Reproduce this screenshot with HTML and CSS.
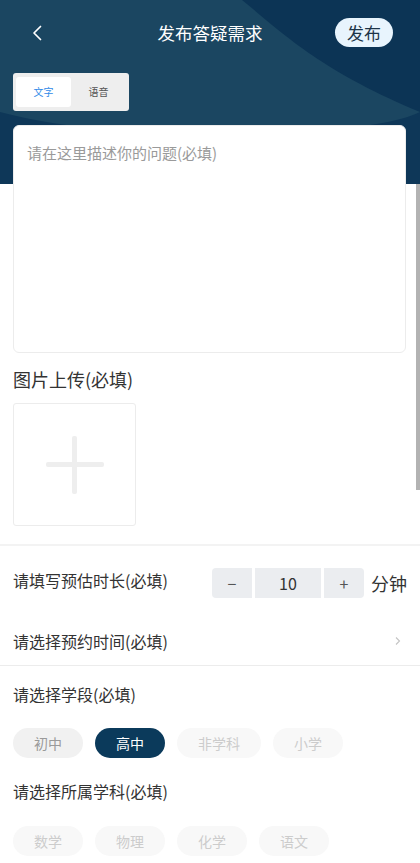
FILE: index.html
```html
<!DOCTYPE html>
<html lang="zh">
<head>
<meta charset="utf-8">
<title>发布答疑需求</title>
<link rel="stylesheet" href="styles.css">
</head>
<body>
<div class="page">
  <svg class="hero-bg" width="420" height="184" viewBox="0 0 420 184" preserveAspectRatio="none">
    <rect x="0" y="0" width="420" height="184" fill="#1b4661"/>
    <path d="M242 0 C 285 35, 320 70, 420 112 L420 0 Z" fill="#0c3455"/>
    <path d="M0 112 C 60 128, 160 140, 300 132 C 360 128, 400 122, 420 112 L420 184 L0 184 Z" fill="#0e3758"/>
  </svg>

  <div class="nav">
    <span class="back">
      <svg width="12" height="16" viewBox="0 0 12 16"><polyline points="9.5,1.5 3,8 9.5,14.5" fill="none" stroke="#ffffff" stroke-width="1.7" stroke-linecap="round" stroke-linejoin="round"/></svg>
    </span>
    <span class="title">发布答疑需求</span>
    <span class="publish">发布</span>
  </div>

  <div class="tabs">
    <span class="tab active">文字</span>
    <span class="tab">语音</span>
  </div>

  <div class="text-card">
    <span class="placeholder">请在这里描述你的问题(必填)</span>
  </div>

  <div class="section-title">图片上传(必填)</div>
  <div class="upload">
    <span class="plus-h"></span>
    <span class="plus-v"></span>
  </div>

  <div class="divider-thick"></div>

  <div class="row duration">
    <span class="label">请填写预估时长(必填)</span>
    <div class="stepper-wrap">
      <div class="stepper">
        <span class="step-btn">−</span>
        <span class="step-val">10</span>
        <span class="step-btn">+</span>
      </div>
      <span class="unit">分钟</span>
    </div>
  </div>

  <div class="row appoint">
    <span class="label">请选择预约时间(必填)</span>
    <svg class="arrow" width="8" height="10" viewBox="0 0 8 10"><polyline points="2,1.5 5.5,5 2,8.5" fill="none" stroke="#c4c4c4" stroke-width="1.1"/></svg>
  </div>
  <div class="divider-thin"></div>

  <div class="label group-label">请选择学段(必填)</div>
  <div class="chips">
    <span class="chip chip-normal">初中</span>
    <span class="chip chip-active">高中</span>
    <span class="chip chip-faint chip-wide">非学科</span>
    <span class="chip chip-faint">小学</span>
  </div>

  <div class="label group-label second">请选择所属学科(必填)</div>
  <div class="chips subjects">
    <span class="chip chip-faint">数学</span>
    <span class="chip chip-faint">物理</span>
    <span class="chip chip-faint">化学</span>
    <span class="chip chip-faint">语文</span>
  </div>

  <div class="scrollbar"></div>
</div>
</body>
</html>
```

FILE: styles.css
```css
* { box-sizing: border-box; }
html, body {
  margin: 0;
  padding: 0;
  background: #ffffff;
}
body {
  font-family: "Noto Sans CJK SC", "Noto Sans", sans-serif;
  color: #333333;
}
.page {
  position: relative;
  width: 420px;
  height: 863px;
  overflow: hidden;
  background: #ffffff;
}
.hero-bg {
  position: absolute;
  left: 0;
  top: 0;
  z-index: 0;
}
.nav, .tabs, .text-card, .section-title, .upload, .row, .chips, .group-label, .divider-thick, .divider-thin {
  position: relative;
  z-index: 1;
}
.nav {
  height: 66px;
  display: grid;
  grid-template-columns: 1fr auto 1fr;
  align-items: center;
  padding: 0 27px;
}
.back {
  width: 12px;
  height: 16px;
  display: flex;
  justify-self: start;
  margin-left: 4px;
}
.title {
  color: #ffffff;
  font-size: 17.5px;
  line-height: 24px;
}
.publish {
  justify-self: end;
  width: 58px;
  height: 29px;
  border-radius: 15px;
  background: #e8f4fd;
  color: #1c3448;
  font-size: 17px;
  line-height: 29px;
  text-align: center;
  margin-top: -2px;
}
.tabs {
  margin: 7px 0 0 13px;
  width: 116px;
  height: 38px;
  background: #eeeeee;
  border-radius: 3px;
  padding: 4px 3px;
  display: flex;
}
.tab {
  width: 55px;
  height: 30px;
  font-size: 10px;
  line-height: 30px;
  text-align: center;
  color: #555555;
}
.tab.active {
  background: #ffffff;
  color: #2f8ae8;
  border-radius: 3px;
}
.text-card {
  margin: 14px 14px 0 13px;
  height: 228px;
  background: #ffffff;
  border: 1px solid #ececec;
  border-radius: 6px;
  padding: 14px 13px;
}
.placeholder {
  font-size: 15px;
  line-height: 21px;
  color: #9a9a9a;
}
.section-title {
  margin: 14px 0 0 13px;
  font-size: 18px;
  line-height: 25px;
  color: #333333;
}
.upload {
  margin: 11px 0 0 13px;
  width: 123px;
  height: 123px;
  border: 1px solid #ececec;
  border-radius: 3px;
  display: grid;
  place-items: center;
}
.plus-h, .plus-v {
  grid-area: 1 / 1;
  background: #eeeeee;
  border-radius: 2px;
}
.plus-h { width: 58px; height: 5px; }
.plus-v { width: 5px; height: 58px; }
.divider-thick {
  margin-top: 18px;
  height: 2px;
  background: #f3f3f3;
}
.row {
  display: flex;
  align-items: center;
  justify-content: space-between;
  padding: 0 13px;
}
.label {
  font-size: 16px;
  line-height: 22px;
  color: #333333;
}
.duration {
  margin-top: 22px;
  height: 30px;
}
.duration .label {
  margin-top: -6px;
}
.stepper-wrap {
  display: flex;
  align-items: center;
  gap: 7px;
}
.stepper {
  display: flex;
  gap: 3px;
}
.step-btn {
  width: 40px;
  height: 30px;
  background: #ebedf0;
  text-align: center;
  line-height: 30px;
  font-size: 16px;
  color: #555555;
}
.step-btn:first-child { border-radius: 4px 0 0 4px; }
.step-btn:last-child { border-radius: 0 4px 4px 0; }
.step-val {
  width: 66px;
  height: 30px;
  background: #ebedf0;
  text-align: center;
  line-height: 30px;
  font-size: 16px;
  color: #333333;
}
.unit {
  font-size: 18px;
  line-height: 24px;
  color: #333333;
}
.appoint {
  margin-top: 32px;
  height: 22px;
  padding-right: 18px;
}
.divider-thin {
  margin-top: 13px;
  height: 1px;
  background: #ececec;
}
.group-label {
  margin: 17px 0 0 13px;
}
.group-label.second {
  margin-top: 22px;
}
.chips {
  display: flex;
  gap: 12px;
  margin: 23px 0 0 13px;
}
.chips.subjects {
  margin-top: 24px;
}
.chip {
  width: 70px;
  height: 30px;
  border-radius: 15px;
  font-size: 14px;
  line-height: 30px;
  text-align: center;
}
.chip-wide { width: 84px; }
.chip-normal {
  background: #f1f1f1;
  color: #9a9a9a;
}
.chip-active {
  background: #0b3a5b;
  color: #ffffff;
}
.chip-faint {
  background: #f8f8f8;
  color: #cccccc;
}
.scrollbar {
  position: absolute;
  right: 0;
  top: 184px;
  width: 4px;
  height: 306px;
  background: #b3b3b3;
  z-index: 2;
}
```
